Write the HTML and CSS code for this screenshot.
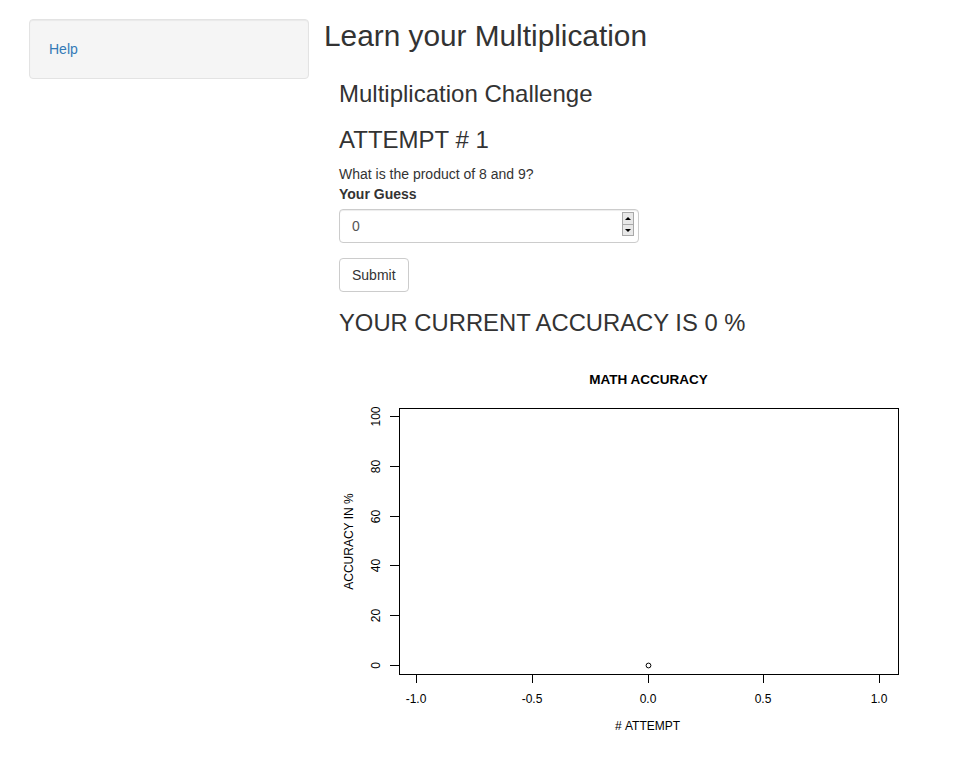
FILE: index.html
```html
<!DOCTYPE html>
<html>
<head>
<meta charset="utf-8">
<title>Learn your Multiplication</title>
<link rel="stylesheet" href="styles.css">
</head>
<body>
<div class="page">
  <aside class="sidebar">
    <div class="well"><a href="#" class="help-link">Help</a></div>
  </aside>
  <main class="main">
    <h2 class="title">Learn your Multiplication</h2>
    <div class="content">
      <h3 class="h-challenge">Multiplication Challenge</h3>
      <h3 class="h-attempt">ATTEMPT # 1</h3>
      <div class="question">What is the product of 8 and 9?</div>
      <div class="form-group">
        <label class="label" for="guess">Your Guess</label>
        <div class="input-wrap">
          <input id="guess" class="form-control" type="text" value="0">
          <div class="spinner">
            <span class="spin-up"><span class="tri-up"></span></span>
            <span class="spin-down"><span class="tri-down"></span></span>
          </div>
        </div>
      </div>
      <button class="btn" type="button">Submit</button>
      <h3 class="h-accuracy">YOUR CURRENT ACCURACY IS 0 %</h3>
      <svg class="plot" width="600" height="400" viewBox="339 346 600 400" xmlns="http://www.w3.org/2000/svg">
        <text x="648.5" y="383" class="p-title" text-anchor="middle">MATH ACCURACY</text>
        <rect x="399.5" y="407.5" width="499" height="266" fill="none" stroke="#000" stroke-width="1"/>
        <g stroke="#000" stroke-width="1">
          <line x1="390" y1="664.5" x2="399" y2="664.5"/>
          <line x1="390" y1="614.5" x2="399" y2="614.5"/>
          <line x1="390" y1="564.5" x2="399" y2="564.5"/>
          <line x1="390" y1="515.5" x2="399" y2="515.5"/>
          <line x1="390" y1="465.5" x2="399" y2="465.5"/>
          <line x1="390" y1="415.5" x2="399" y2="415.5"/>
          <line x1="416.5" y1="674" x2="416.5" y2="682"/>
          <line x1="532.5" y1="674" x2="532.5" y2="682"/>
          <line x1="648.5" y1="674" x2="648.5" y2="682"/>
          <line x1="763.5" y1="674" x2="763.5" y2="682"/>
          <line x1="879.5" y1="674" x2="879.5" y2="682"/>
        </g>
        <g class="p-tick" text-anchor="middle">
          <text transform="translate(380 664.5) rotate(-90)">0</text>
          <text transform="translate(380 614.5) rotate(-90)">20</text>
          <text transform="translate(380 564.5) rotate(-90)">40</text>
          <text transform="translate(380 515.5) rotate(-90)">60</text>
          <text transform="translate(380 465.5) rotate(-90)">80</text>
          <text transform="translate(380 415.5) rotate(-90)">100</text>
          <text x="416" y="702">-1.0</text>
          <text x="532" y="702">-0.5</text>
          <text x="648" y="702">0.0</text>
          <text x="763" y="702">0.5</text>
          <text x="879" y="702">1.0</text>
          <text x="647.5" y="729">#&#160;ATTEMPT</text>
          <text transform="translate(353 540.5) rotate(-90)">ACCURACY IN %</text>
        </g>
        <circle cx="648.5" cy="664.5" r="2.4" fill="none" stroke="#000" stroke-width="1"/>
      </svg>
    </div>
  </main>
</div>
</body>
</html>
```
FILE: styles.css
```css
html, body {
  margin: 0;
  padding: 0;
  background: #fff;
}
body {
  font-family: "Liberation Sans", Arial, Helvetica, sans-serif;
  font-size: 14px;
  line-height: 20px;
  color: #333;
}
.page {
  display: flex;
  align-items: flex-start;
  padding-left: 29px;
  gap: 15px;
}
.sidebar {
  width: 280px;
  flex: none;
}
.well {
  margin-top: 19px;
  min-height: 20px;
  padding: 19px;
  background: #f5f5f5;
  border: 1px solid #e3e3e3;
  border-radius: 4px;
  box-shadow: inset 0 1px 1px rgba(0,0,0,.05);
}
.help-link {
  color: #337ab7;
  text-decoration: none;
}
.main {
  flex: 1;
  min-width: 0;
}
.title {
  margin: 19px 0 0;
  font-size: 29.8px;
  line-height: 33px;
  font-weight: 500;
}
.content {
  padding-left: 15px;
}
h3 {
  font-size: 24px;
  line-height: 26.4px;
  font-weight: 500;
  margin: 0;
}
.h-challenge {
  margin-top: 29px;
}
.h-attempt {
  margin-top: 19.6px;
}
.question {
  margin-top: 11px;
}
.form-group {
  margin-bottom: 15px;
}
.label {
  display: block;
  font-weight: bold;
  margin-bottom: 5px;
}
.input-wrap {
  position: relative;
  width: 300px;
}
.form-control {
  display: block;
  box-sizing: border-box;
  width: 300px;
  height: 34px;
  padding: 6px 12px;
  font-family: inherit;
  font-size: 14px;
  line-height: 20px;
  color: #555;
  background: #fff;
  border: 1px solid #ccc;
  border-radius: 4px;
  box-shadow: inset 0 1px 1px rgba(0,0,0,.075);
  outline: none;
}
.spinner {
  position: absolute;
  top: 3px;
  right: 5px;
  width: 12px;
  height: 24px;
  display: flex;
  flex-direction: column;
  box-sizing: border-box;
  border: 1px solid #a9a9a9;
  background: #e8e8e8;
}
.spin-up, .spin-down {
  flex: 1;
  display: flex;
  align-items: center;
  justify-content: center;
}
.spin-up {
  border-bottom: 1px solid #a9a9a9;
}
.tri-up {
  width: 0;
  height: 0;
  border-left: 3px solid transparent;
  border-right: 3px solid transparent;
  border-bottom: 3px solid #000;
}
.tri-down {
  width: 0;
  height: 0;
  border-left: 3px solid transparent;
  border-right: 3px solid transparent;
  border-top: 3px solid #000;
}
.btn {
  display: block;
  height: 34px;
  padding: 6px 12px;
  font-family: inherit;
  font-size: 14px;
  line-height: 20px;
  color: #333;
  background: #fff;
  border: 1px solid #ccc;
  border-radius: 4px;
  cursor: pointer;
}
.h-accuracy {
  margin-top: 18px;
  margin-bottom: 10px;
  font-size: 23.8px;
}
.plot {
  display: block;
}
.p-title {
  font-family: "Liberation Sans", Arial, sans-serif;
  font-size: 13.5px;
  font-weight: bold;
  fill: #000;
}
.p-tick {
  font-family: "Liberation Sans", Arial, sans-serif;
  font-size: 12px;
  fill: #000;
}
```
